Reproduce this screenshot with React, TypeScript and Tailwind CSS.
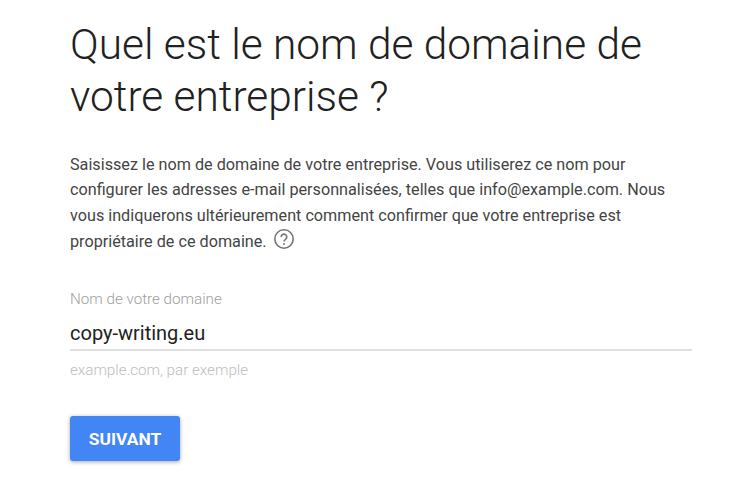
export default function App() {
  return (
    <div className="w-[739px] h-[499px] bg-white overflow-hidden pl-[70px] pr-[47px] pt-[19px] font-['Roboto',sans-serif]">
      <h1 className="text-[42.4px] leading-[52px] font-light text-[#212121]">
        Quel est le nom de domaine de votre entreprise ?
      </h1>
      <p className="mt-[29px] text-[16.2px] leading-[25.3px] text-[#444]">
        Saisissez le nom de domaine de votre entreprise. Vous utiliserez ce nom pour configurer les adresses e-mail personnalisées, telles que info@example.com. Nous vous indiquerons ultérieurement comment confirmer que votre entreprise est propriétaire de ce domaine.
        <svg className="inline-block ml-[6px] align-[-3px]" width="22" height="22" viewBox="0 0 22 22" fill="none">
          <circle cx="11" cy="11" r="9.2" stroke="#757575" strokeWidth="1.6" />
          <path d="M8.2 9a2.8 2.8 0 1 1 4.3 2.3c-1 .7-1.5 1.2-1.5 2.3" stroke="#757575" strokeWidth="1.6" />
          <circle cx="11" cy="16" r="1" fill="#757575" />
        </svg>
      </p>
      <div className="mt-[36px] text-[15.2px] leading-[18px] font-light text-[#9e9e9e]">Nom de votre domaine</div>
      <div className="mt-[11px] border-b-2 border-[#e0e0e0] pb-[2px] text-[20px] leading-[28px] text-[#212121]">copy-writing.eu</div>
      <div className="mt-[10px] text-[15.2px] leading-[18px] font-light text-[#bdbdbd]">example.com, par exemple</div>
      <button className="mt-[37px] block w-[110px] h-[45px] rounded-[3px] bg-[#4285f4] text-white text-[17.4px] font-bold shadow-[0_1px_4px_rgba(0,0,0,0.35)]">SUIVANT</button>
    </div>
  );
}
